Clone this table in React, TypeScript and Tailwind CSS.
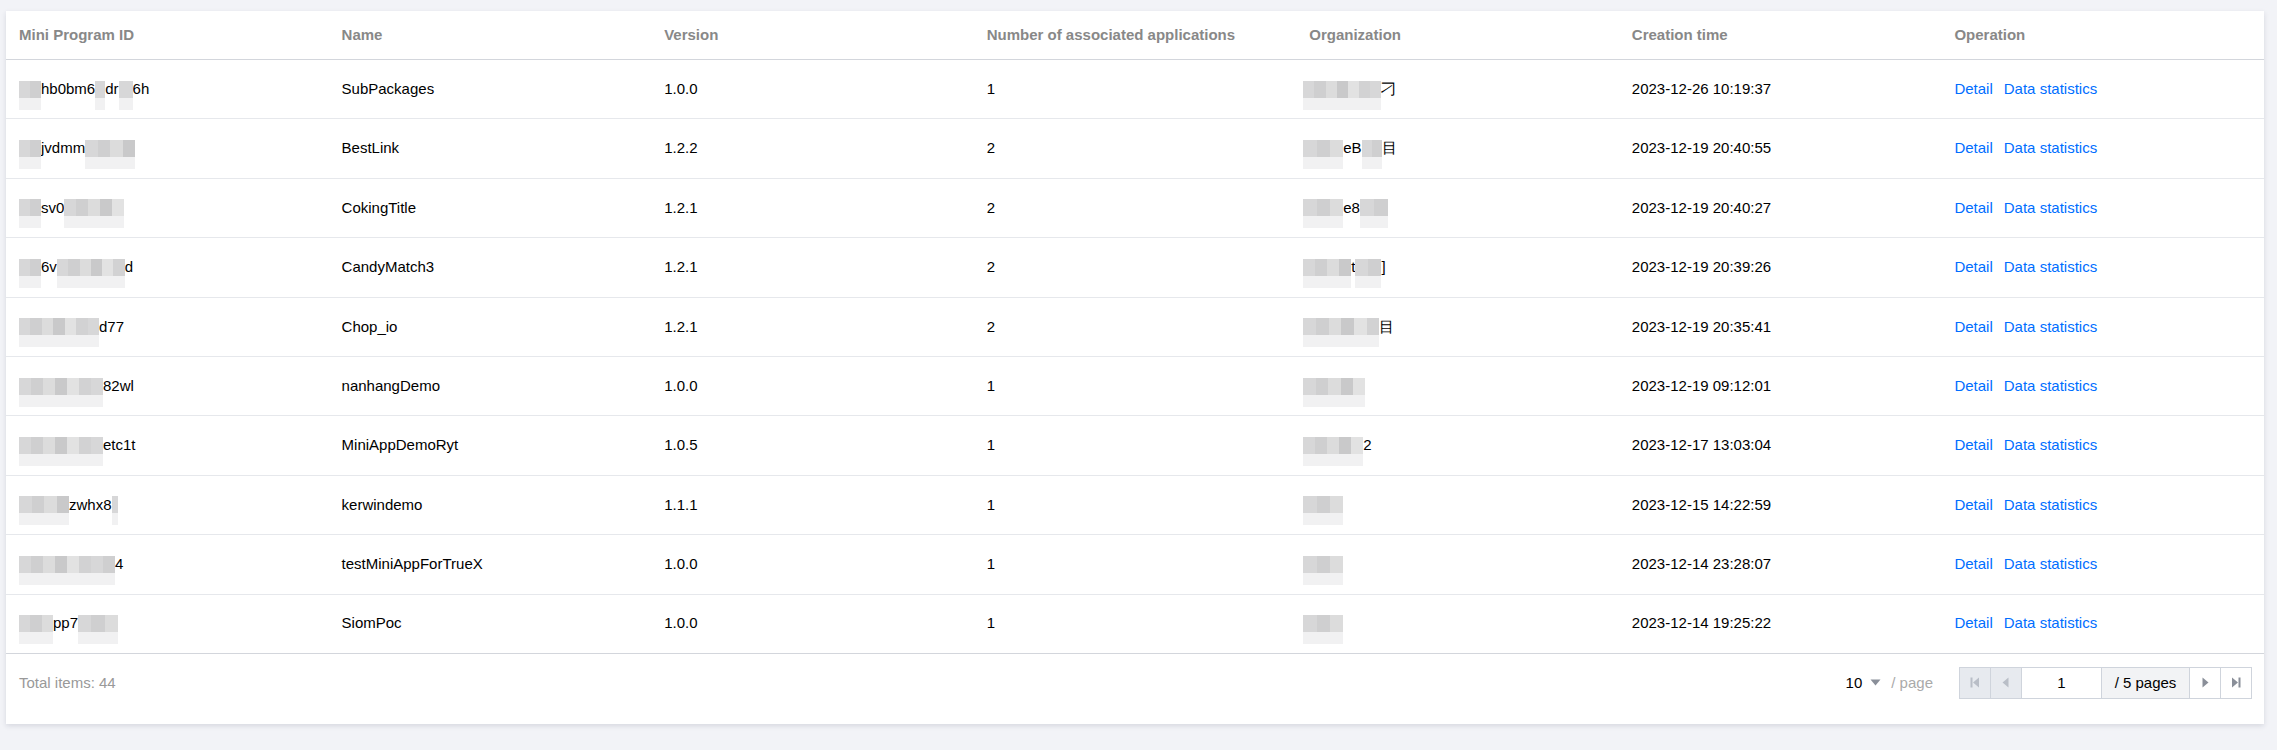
import React from "react";

type Seg = string | number;

type Row = {
    id: Seg[];
    name: string;
    version: string;
    apps: number;
    org: Seg[];
    created: string;
};

const rows: Row[] = [
    { id: [22, "hb0bm6", 10, "dr", 14, "6h"], name: "SubPackages", version: "1.0.0", apps: 1, org: [78, "刁"], created: "2023-12-26 10:19:37" },
    { id: [22, "jvdmm", 50], name: "BestLink", version: "1.2.2", apps: 2, org: [40, "eB", 20, "目"], created: "2023-12-19 20:40:55" },
    { id: [22, "sv0", 60], name: "CokingTitle", version: "1.2.1", apps: 2, org: [40, "e8", 28], created: "2023-12-19 20:40:27" },
    { id: [22, "6v", 68, "d"], name: "CandyMatch3", version: "1.2.1", apps: 2, org: [48, "t", 26, "]"], created: "2023-12-19 20:39:26" },
    { id: [80, "d77"], name: "Chop_io", version: "1.2.1", apps: 2, org: [76, "目"], created: "2023-12-19 20:35:41" },
    { id: [84, "82wl"], name: "nanhangDemo", version: "1.0.0", apps: 1, org: [62], created: "2023-12-19 09:12:01" },
    { id: [84, "etc1t"], name: "MiniAppDemoRyt", version: "1.0.5", apps: 1, org: [60, "2"], created: "2023-12-17 13:03:04" },
    { id: [50, "zwhx8", 6], name: "kerwindemo", version: "1.1.1", apps: 1, org: [40], created: "2023-12-15 14:22:59" },
    { id: [96, "4"], name: "testMiniAppForTrueX", version: "1.0.0", apps: 1, org: [40], created: "2023-12-14 23:28:07" },
    { id: [34, "pp7", 40], name: "SiomPoc", version: "1.0.0", apps: 1, org: [40], created: "2023-12-14 19:25:22" },
];

const tones = ["#d7d7d8", "#cfcfd0", "#dcdcdc", "#c9c9ca", "#e2e2e2", "#d2d2d3"];

// pixelated blur over hidden characters
const Mosaic = ({ w }: { w: number }) => {
    const cells = Math.max(1, Math.round(w / 12));
    return (
        <span className="relative flex h-[17px] shrink-0" style={{ width: w }}>
            {Array.from({ length: cells }).map((_, i) => (
                <span key={i} className="h-full flex-1" style={{ background: tones[i % tones.length] }} />
            ))}
            <span className="absolute left-0 top-full h-[12px] w-full bg-[#f1f1f2]" />
        </span>
    );
};

const Masked = ({ segs }: { segs: Seg[] }) => (
    <div className="flex items-center whitespace-nowrap">
        {segs.map((s, i) => (typeof s === "number" ? <Mosaic key={i} w={s} /> : <span key={i}>{s}</span>))}
    </div>
);

const headers = ["Mini Program ID", "Name", "Version", "Number of associated applications", "Organization", "Creation time", "Operation"];

const PageIcon = ({ kind, disabled }: { kind: "first" | "prev" | "next" | "last"; disabled?: boolean }) => {
    const c = disabled ? "#b9bec7" : "#8a8f99";
    return (
        <svg width="10" height="11" viewBox="0 0 10 11">
            {kind === "first" && (
                <>
                    <rect x="0.5" y="0.5" width="2" height="10" fill={c} />
                    <path d="M9 0.5 L3 5.5 L9 10.5 Z" fill={c} />
                </>
            )}
            {kind === "prev" && <path d="M7.5 0.5 L1.5 5.5 L7.5 10.5 Z" fill={c} />}
            {kind === "next" && <path d="M2.5 0.5 L8.5 5.5 L2.5 10.5 Z" fill={c} />}
            {kind === "last" && (
                <>
                    <path d="M1 0.5 L7 5.5 L1 10.5 Z" fill={c} />
                    <rect x="7.5" y="0.5" width="2" height="10" fill={c} />
                </>
            )}
        </svg>
    );
};

export default function App() {
    return (
        <div className="min-h-[750px] w-full bg-[#f2f3f7] pl-[6px] pr-[13px] pt-[11px] font-['Liberation_Sans',Arial,sans-serif] text-[15px]">
            <div className="bg-white shadow-[0_2px_5px_rgba(30,40,70,0.13)]">
                {/* header */}
                <div className="grid h-[49px] grid-cols-7 items-center border-b border-[#d3d6dc]">
                    {headers.map((h) => (
                        <div key={h} className="truncate pl-[13px] font-bold text-[#888888]">
                            {h}
                        </div>
                    ))}
                </div>

                {/* body */}
                {rows.map((r, i) => (
                    <div key={i} className="grid h-[59.4px] grid-cols-7 items-center border-b border-[#e6e8ec] text-black">
                        <div className="pl-[13px]">
                            <Masked segs={r.id} />
                        </div>
                        <div className="pl-[13px]">{r.name}</div>
                        <div className="pl-[13px]">{r.version}</div>
                        <div className="pl-[13px]">{r.apps}</div>
                        <div className="pl-[7px]">
                            <Masked segs={r.org} />
                        </div>
                        <div className="pl-[13px]">{r.created}</div>
                        <div className="flex gap-[11px] pl-[13px] text-[#006eff]">
                            <span>Detail</span>
                            <span>Data statistics</span>
                        </div>
                    </div>
                ))}

                {/* footer */}
                <div className="-mt-px flex items-center justify-between border-t border-[#d3d6dc] pb-[25px] pl-[13px] pr-[12px] pt-[13px]">
                    <span className="text-[#999999]">Total items: 44</span>
                    <div className="flex items-center">
                        <div className="flex items-center text-black">
                            <span>10</span>
                            <svg className="ml-[8px]" width="11" height="7" viewBox="0 0 11 7">
                                <path d="M0.5 0.5 L10.5 0.5 L5.5 6.5 Z" fill="#8a8f99" />
                            </svg>
                        </div>
                        <span className="ml-[10px] text-[#aaaaaa]">/ page</span>
                        <div className="ml-[26px] flex h-[32px] border border-[#cfd4dc]">
                            <div className="flex w-[30px] items-center justify-center bg-[#e7eaef]">
                                <PageIcon kind="first" disabled />
                            </div>
                            <div className="flex w-[31px] items-center justify-center border-l border-[#cfd4dc] bg-[#e7eaef]">
                                <PageIcon kind="prev" disabled />
                            </div>
                            <div className="flex w-[80px] items-center justify-center border-l border-[#cfd4dc] bg-white text-black">1</div>
                            <div className="flex w-[88px] items-center justify-center border-l border-[#cfd4dc] bg-[#f2f3f5] text-black">
                                / 5 pages
                            </div>
                            <div className="flex w-[31px] items-center justify-center border-l border-[#cfd4dc] bg-white">
                                <PageIcon kind="next" />
                            </div>
                            <div className="flex w-[31px] items-center justify-center border-l border-[#cfd4dc] bg-white">
                                <PageIcon kind="last" />
                            </div>
                        </div>
                    </div>
                </div>
            </div>
        </div>
    );
}
